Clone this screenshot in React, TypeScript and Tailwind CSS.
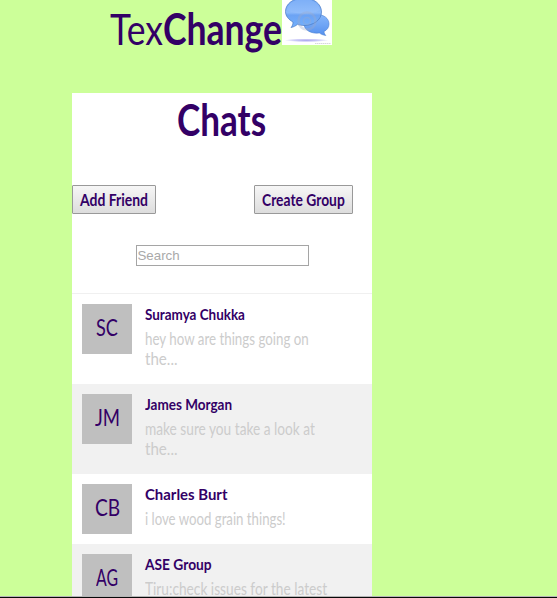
import React from "react";

type Chat = {
  initials: string;
  name: string;
  lines: string[];
  shaded: boolean;
  height: string;
  initialsClass: string;
  nameClass: string;
  lineClasses: string[];
};

const chats: Chat[] = [
  {
    initials: "SC", name: "Suramya Chukka", lines: ["hey how are things going on", "the..."],
    shaded: false, height: "h-[90px]", initialsClass: "w-[22px]",
    nameClass: "w-[100px]", lineClasses: ["w-[164px]", "w-[33px]"],
  },
  {
    initials: "JM", name: "James Morgan", lines: ["make sure you take a look at", "the..."],
    shaded: true, height: "h-[90px]", initialsClass: "w-[25px]",
    nameClass: "w-[87px]", lineClasses: ["w-[170px]", "w-[33px]"],
  },
  {
    initials: "CB", name: "Charles Burt", lines: ["i love wood grain things!"],
    shaded: false, height: "h-[70px]", initialsClass: "w-[25px]",
    nameClass: "w-[82px]", lineClasses: ["w-[141px]"],
  },
  {
    initials: "AG", name: "ASE Group", lines: ["Tiru:check issues for the latest"],
    shaded: true, height: "h-[90px]", initialsClass: "w-[22px]",
    nameClass: "w-[67px]", lineClasses: ["w-[182px]"],
  },
];

/* Condenses a line of lettering to the width of its box. */
function Lettering({ children, className = "" }: { children: React.ReactNode; className?: string }) {
  const box = React.useRef<HTMLSpanElement>(null);
  const text = React.useRef<HTMLSpanElement>(null);
  const [scale, setScale] = React.useState(1);
  React.useLayoutEffect(() => {
    if (box.current && text.current) {
      setScale(box.current.offsetWidth / text.current.offsetWidth);
    }
  }, [children]);
  return (
    <span ref={box} className={`block shrink-0 whitespace-nowrap ${className}`}>
      <span ref={text} className="inline-block origin-left" style={{ transform: `scaleX(${scale})` }}>
        {children}
      </span>
    </span>
  );
}

function BubblesLogo() {
  return (
    <svg className="block h-[45px] w-[50px] shrink-0" viewBox="0 0 50 45">
      <defs>
        <linearGradient id="back" x1="0" y1="0" x2="0" y2="1">
          <stop offset="0" stopColor="#86b6fb" />
          <stop offset="0.5" stopColor="#6fa5f5" />
          <stop offset="1" stopColor="#5590ee" />
        </linearGradient>
        <linearGradient id="front" x1="0" y1="0" x2="0" y2="1">
          <stop offset="0" stopColor="#6aa3f5" />
          <stop offset="0.5" stopColor="#8ab9fa" />
          <stop offset="0.58" stopColor="#6ca3f4" />
          <stop offset="1" stopColor="#73b1fc" />
        </linearGradient>
        <radialGradient id="shade">
          <stop offset="0" stopColor="#a9a5ee" />
          <stop offset="0.6" stopColor="#d1cff8" />
          <stop offset="1" stopColor="#ffffff" />
        </radialGradient>
      </defs>
      <rect width="50" height="45" fill="#fff" />
      <ellipse cx="24.5" cy="40.3" rx="22" ry="1.8" fill="url(#shade)" />
      <path d="M35 14.5C42 14.5 47 18.5 47 24C47 27.5 45 30 42 31.5C42 33 43 34.5 43.8 35.5C41 35 38.8 34.2 37.5 33C29 34 22 30 22 24C22 18.5 28 14.5 35 14.5Z" fill="url(#back)" stroke="#497fd2" strokeWidth=".6" />
      <path d="M21.5-2C32-2 39.5 4 39.5 12C39.5 20 31.5 25.5 22 25.5C19.5 25.5 17 25 15.5 24.3C13.5 26 11.5 27 9 27.5C10.5 26 11 24 11 22C6.5 19.5 3.5 16 3.5 11.5C3.5 4 11-2 21.5-2Z" fill="url(#front)" stroke="#4778c3" strokeWidth=".7" />
      <path d="M5 10C6 3 13-1 22-1S37 4 38 10C29 15 14 15 5 10Z" fill="#a1c8fc" opacity=".3" />
      <g fill="none" stroke="#9daaca" opacity=".35">
        <circle cx="25" cy="21" r="8.5" strokeWidth="2.5" />
        <circle cx="25" cy="21" r="3.5" strokeWidth="1.5" />
      </g>
      <path d="M33 43.5H49" stroke="#d8d8dc" strokeWidth="1" strokeDasharray="1.5 .5" />
    </svg>
  );
}

function ActionButton({ children, width }: { children: string; width: string }) {
  return (
    <button className="flex h-[29px] items-center rounded-[1px] border border-[#999] bg-linear-to-b from-[#f6f6f6] to-[#dddddd] px-[7px] text-[17px] font-bold leading-[27px]">
      <Lettering className={width}>{children}</Lettering>
    </button>
  );
}

function ChatRow({ chat }: { chat: Chat }) {
  return (
    <li className={`flex ${chat.height} pl-[10px] pt-[10px] ${chat.shaded ? "bg-[#f1f1f1]" : "bg-white"}`}>
      <div className="flex size-[50px] shrink-0 justify-center bg-[#bfbfbf] text-[23px] leading-[47px]">
        <Lettering className={chat.initialsClass}>{chat.initials}</Lettering>
      </div>
      <div className="ml-[13px]">
        <div className="h-[25px] text-[16px] font-bold leading-[19px]">
          <Lettering className={chat.nameClass}>{chat.name}</Lettering>
        </div>
        <div className="text-[16.5px] leading-[20px] text-[#cccccc]">
          {chat.lines.map((line, i) => (
            <Lettering key={line} className={chat.lineClasses[i]}>{line}</Lettering>
          ))}
        </div>
      </div>
    </li>
  );
}

export default function App() {
  return (
    <div className="flex h-[598px] w-[557px] flex-col overflow-hidden bg-[#ccff99] font-[Lato,sans-serif] text-[#330066]">
      <header className="flex h-[93px] shrink-0 items-start pl-[110px]">
        <h1 className="pt-[3px] text-[43px] leading-[52px]">
          <Lettering className="w-[172px]">
            Tex<span className="font-bold">Change</span>
          </Lettering>
        </h1>
        <BubblesLogo />
      </header>
      <main className="ml-[72px] h-[503px] w-[300px] shrink-0 overflow-hidden bg-white">
        <h2 className="flex h-[92px] justify-center pr-[1px] pt-[1px] text-[43px] font-bold leading-[52px]">
          <Lettering className="w-[89px]">Chats</Lettering>
        </h2>
        <div className="flex justify-between pr-[19px]">
          <ActionButton width="w-[68px]">Add Friend</ActionButton>
          <ActionButton width="w-[83px]">Create Group</ActionButton>
        </div>
        <div className="flex h-[79px] justify-center pt-[31px]">
          <input
            placeholder="Search"
            className="h-[21px] w-[173px] border border-[#a5a5a5] bg-white px-[1px] font-['Liberation_Sans',sans-serif] text-[13.3px] leading-[17px] outline-none placeholder:text-[#a9a9a9]"
          />
        </div>
        <ul className="border-t border-[#f0f0f0]">
          {chats.map((chat) => <ChatRow key={chat.initials} chat={chat} />)}
        </ul>
      </main>
      <footer className="h-[2px] shrink-0 border-t border-[#b5b5b5] bg-[#080808]" />
    </div>
  );
}
